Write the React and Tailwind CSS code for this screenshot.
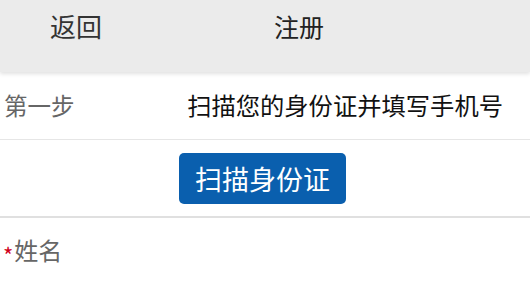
export default function App() {
  return (
    <div
      className="w-[530px] h-[282px] overflow-hidden bg-white"
      style={{ fontFamily: '"Noto Sans CJK SC", "Noto Sans", sans-serif' }}
    >
      {/* header */}
      <div className="relative z-10 h-[72px] bg-[#ebebeb] shadow-[0_2px_4px_rgba(0,0,0,0.12)]">
        <div className="flex items-center h-[52px]">
          <span className="ml-[50px] text-[26px] leading-none text-[#333]">返回</span>
          <span className="ml-[172px] text-[25px] leading-none text-[#222]">注册</span>
        </div>
      </div>

      {/* step row */}
      <div className="flex items-center justify-between h-[68px] border-b border-[#e6e6e6] pl-[4px] pr-[27px]">
        <span className="text-[23.5px] leading-none text-[#666]">第一步</span>
        <span className="text-[24.3px] leading-none text-[#111]">扫描您的身份证并填写手机号</span>
      </div>

      {/* scan button */}
      <div className="flex items-center h-[78px] border-b-2 border-[#e0e0e0]">
        <button className="ml-[179px] w-[167px] h-[51px] rounded-[5px] bg-[#0a5fae] text-white text-[27px] leading-none">
          扫描身份证
        </button>
      </div>

      {/* name row */}
      <div className="flex items-center h-[64px] pl-[3px]">
        <span className="text-[22px] leading-none text-[#d0021b] mt-[8px]">*</span>
        <span className="ml-[1px] text-[24px] leading-none text-[#666]">姓名</span>
      </div>
    </div>
  );
}
